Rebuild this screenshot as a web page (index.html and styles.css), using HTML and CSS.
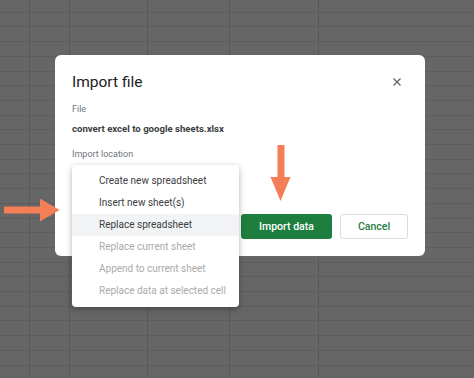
FILE: index.html
```html
<!DOCTYPE html>
<html lang="en">
<head>
  <meta charset="UTF-8"/>
  <title>Import file</title>
  <link rel="stylesheet" href="styles.css">
</head>
<body>

  <div class="dialog" role="dialog">
    <div class="dialog-header">
      <h1>Import file</h1>
      <button class="close-btn" aria-label="Close">
        <svg viewBox="0 0 8 8"><path d="M0.5 0.5L7.5 7.5M7.5 0.5L0.5 7.5"/></svg>
      </button>
    </div>
    <div class="label">File</div>
    <div class="filename">convert excel to google sheets.xlsx</div>
    <div class="label label-location">Import location</div>

    <div class="dialog-footer">
      <button class="btn-primary">Import data</button>
      <button class="btn-secondary">Cancel</button>
    </div>

    <ul class="menu" role="listbox">
      <li>Create new spreadsheet</li>
      <li>Insert new sheet(s)</li>
      <li class="selected">Replace spreadsheet</li>
      <li class="disabled">Replace current sheet</li>
      <li class="disabled">Append to current sheet</li>
      <li class="disabled">Replace data at selected cell</li>
    </ul>
  </div>

  <!-- annotation arrows -->
  <svg class="arrow arrow-right" viewBox="0 0 60 24">
    <path d="M4 7.5H40V-0.5L59.5 11 40 22.5V14.5H4Z"/>
  </svg>
  <svg class="arrow arrow-down" viewBox="0 0 22 56">
    <path d="M7.5 0H14.5V32H20.5L10.5 56 0.5 32H7.5Z"/>
  </svg>

</body>
</html>
```

FILE: styles.css
```css
*,*::before,*::after { box-sizing:border-box; margin:0; padding:0 }
body {
  width: 474px;
  height: 378px;
  overflow: hidden;
  font-family: Roboto, "Liberation Sans", sans-serif;
  background-color: #666666;
  background-image:
    linear-gradient(#595959,#595959),
    linear-gradient(#595959,#595959),
    linear-gradient(#595959,#595959),
    linear-gradient(#595959,#595959),
    linear-gradient(#595959,#595959),
    repeating-linear-gradient(to bottom, transparent 0 13.7px, #5d5d5d 13.7px 14.7px);
  background-size: 1px 100%, 1px 100%, 1px 100%, 1px 100%, 1px 100%, 100% 100%;
  background-position: 29px 0, 69px 0, 147px 0, 229px 0, 318px 0, 0 -2px;
  background-repeat: no-repeat;
  position: relative;
}
.dialog {
  position: relative;
  width: 370px;
  margin: 55px 0 0 55px;
  padding: 15px 17px 17px;
  background: #ffffff;
  border-radius: 6px;
  color: #3c4043;
}
.dialog-header {
  display: flex;
  justify-content: space-between;
  align-items: center;
  height: 24px;
}
.dialog-header h1 {
  font-size: 15.5px;
  font-weight: 400;
  line-height: 24px;
  color: #202124;
}
.close-btn {
  width: 22px; height: 22px;
  background: none; border: none;
  display: flex; justify-content: center; align-items: center;
}
.close-btn svg {
  width: 8px; height: 8px;
  stroke: #5f6368; stroke-width: 1.3;
  fill: none;
}
.label {
  font-size: 9px;
  line-height: 12px;
  color: #70757a;
  margin-top: 9px;
}
.label-location {
  margin-top: 12px;
}
.filename {
  font-size: 9.6px;
  line-height: 14px;
  font-weight: 700;
  color: #3c4043;
  margin-top: 7px;
}
.dialog-footer {
  display: flex;
  justify-content: flex-end;
  gap: 8px;
  margin-top: 54px;
}
.dialog-footer button {
  height: 25px;
  border-radius: 3px;
  font-family: inherit;
  font-size: 10.5px;
  font-weight: 500;
}
.btn-primary {
  width: 91px;
  background: #1e7e3e;
  border: none;
  color: #ffffff;
}
.btn-secondary {
  width: 68px;
  background: #ffffff;
  border: 1px solid #dadce0;
  color: #1e7e3e;
}
/* dropdown lies over the dialog */
.menu {
  position: absolute;
  left: 17px; top: 110px;
  width: 167px;
  padding: 5px 0;
  list-style: none;
  background: #ffffff;
  border-radius: 4px;
  box-shadow: 0 2px 6px rgba(0,0,0,0.3);
}
.menu li {
  height: 22px;
  line-height: 22px;
  padding-left: 27px;
  font-size: 10px;
  color: #3c4043;
  white-space: nowrap;
}
.menu li.selected {
  background: #f1f3f4;
}
.menu li.disabled {
  color: #aaaaaa;
}
.arrow {
  position: absolute;
  fill: #f47f57;
}
.arrow-right {
  left: 0; top: 199px;
  width: 60px; height: 24px;
}
.arrow-down {
  left: 270px; top: 145px;
  width: 22px; height: 56px;
}
```
